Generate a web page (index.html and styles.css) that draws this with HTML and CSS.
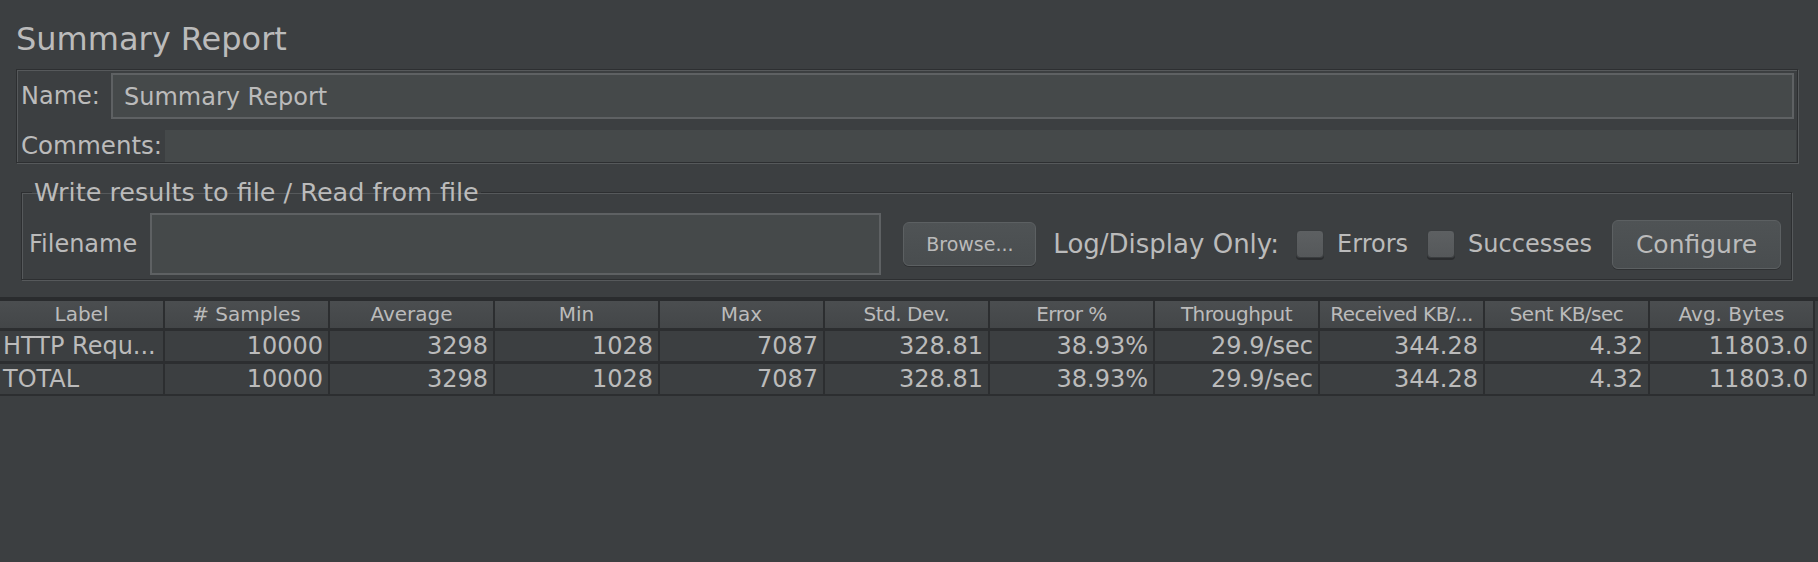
FILE: index.html
```html
<!DOCTYPE html>
<html>
<head>
<meta charset="utf-8">
<link rel="stylesheet" href="styles.css">
</head>
<body>
<div class="page">
  <h1 class="title">Summary Report</h1>
  <div class="name-panel">
    <div class="row name-row">
      <label class="lbl name-lbl">Name:</label>
      <div class="input name-input">Summary Report</div>
    </div>
    <div class="row comments-row">
      <label class="lbl">Comments:</label>
      <div class="comments-area"></div>
    </div>
  </div>
  <fieldset class="file-panel">
    <legend class="file-legend">Write results to file / Read from file</legend>
    <div class="file-row">
      <label class="lbl file-lbl">Filename</label>
      <div class="input file-input"></div>
      <button class="btn browse">Browse...</button>
      <span class="log-lbl">Log/Display Only:</span>
      <span class="check check-errors"></span>
      <span class="check-lbl">Errors</span>
      <span class="check check-succ"></span>
      <span class="check-lbl">Successes</span>
      <button class="btn configure">Configure</button>
    </div>
  </fieldset>
  <div class="results">
    <div class="grid">
      <div class="hd">Label</div>
      <div class="hd"># Samples</div>
      <div class="hd">Average</div>
      <div class="hd">Min</div>
      <div class="hd">Max</div>
      <div class="hd cond">Std. Dev.</div>
      <div class="hd cond">Error %</div>
      <div class="hd cond">Throughput</div>
      <div class="hd cond">Received KB/...</div>
      <div class="hd cond">Sent KB/sec</div>
      <div class="hd">Avg. Bytes</div>

      <div class="cell txt">HTTP Requ...</div>
      <div class="cell">10000</div>
      <div class="cell">3298</div>
      <div class="cell">1028</div>
      <div class="cell">7087</div>
      <div class="cell">328.81</div>
      <div class="cell">38.93%</div>
      <div class="cell">29.9/sec</div>
      <div class="cell">344.28</div>
      <div class="cell">4.32</div>
      <div class="cell">11803.0</div>

      <div class="cell txt">TOTAL</div>
      <div class="cell">10000</div>
      <div class="cell">3298</div>
      <div class="cell">1028</div>
      <div class="cell">7087</div>
      <div class="cell">328.81</div>
      <div class="cell">38.93%</div>
      <div class="cell">29.9/sec</div>
      <div class="cell">344.28</div>
      <div class="cell">4.32</div>
      <div class="cell">11803.0</div>
    </div>
  </div>
</div>
</body>
</html>
```
FILE: styles.css
```css
* { box-sizing: border-box; }
html, body {
  margin: 0;
  background: #3c3f41;
  height: 100%;
}
body {
  color: #bbbbbb;
  font-family: "DejaVu Sans", "Liberation Sans", sans-serif;
  font-size: 24px;
}
.title {
  margin: 0;
  padding: 19px 0 0 16px;
  height: 60px;
  font-size: 32px;
  font-weight: normal;
  line-height: 40px;
}
.name-panel {
  margin: 9px 20px 0 16px;
  border: 1px solid #2d2f31;
  box-shadow: 1px 1px 0 #56595b, inset 1px 1px 0 #56595b;
  padding: 3px 3px 0 4px;
}
.row {
  display: flex;
  align-items: center;
}
.name-row {
  height: 46px;
}
.lbl {
  font-size: 24px;
  line-height: 30px;
  white-space: nowrap;
}
.name-lbl {
  width: 90px;
  flex: none;
}
.input {
  background: #45494a;
  border: 2px solid #5e6163;
}
.name-input {
  flex: 1;
  height: 46px;
  padding-left: 11px;
  font-size: 24px;
  line-height: 44px;
}
.comments-row {
  margin-top: 11px;
  height: 32px;
}
.comments-row .lbl {
  font-size: 24.5px;
}
.comments-area {
  flex: 1;
  align-self: stretch;
  background: #45494a;
  margin-right: -2px;
  margin-left: 3px;
}
.file-panel {
  margin: 15px 26px 0 21px;
  border: 1px solid #2d2f31;
  box-shadow: 1px 1px 0 #56595b, inset 1px 1px 0 #56595b;
  padding: 7px 10px 4px 7px;
  min-width: 0;
}
.file-legend {
  font-size: 25.5px;
  line-height: 28px;
  padding: 0 2px;
  margin-left: 3px;
}
.file-row {
  display: flex;
  align-items: center;
  height: 62px;
}
.file-lbl {
  margin-right: 13px;
}
.file-input {
  flex: 1;
  height: 62px;
}
.btn {
  font-family: "DejaVu Sans", "Liberation Sans", sans-serif;
  color: #bbbbbb;
  background: linear-gradient(#4f5355, #494d4f);
  border: 1px solid #5c6062;
  border-radius: 6px;
  box-shadow: 0 1px 0 #2f3133;
  padding: 0;
  flex: none;
}
.browse {
  margin-left: 22px;
  width: 133px;
  height: 44px;
  font-size: 19px;
}
.log-lbl {
  margin-left: 17px;
  font-size: 26px;
  white-space: nowrap;
}
.check {
  flex: none;
  width: 28px;
  height: 28px;
  border-radius: 4px;
  background: linear-gradient(#5d6062, #55585a);
  border: 1px solid #3a3d3f;
  box-shadow: 0 2px 0 #2b2d2f;
  margin-right: 13px;
}
.check-errors { margin-left: 17px; }
.check-succ { margin-left: 19px; }
.check-lbl {
  font-size: 24px;
  white-space: nowrap;
}
.configure {
  margin-left: 20px;
  width: 169px;
  height: 49px;
  font-size: 25px;
}
.results {
  margin-top: 17px;
  border-top: 4px solid #2a2c2e;
}
.grid {
  width: 1815px;
  display: grid;
  grid-template-columns: repeat(11, 1fr);
  column-gap: 2px;
  row-gap: 3px;
  background: #2c2e30;
  border-right: 2px solid #2c2e30;
  padding-bottom: 2px;
}
.hd {
  height: 27px;
  line-height: 27px;
  font-size: 20px;
  text-align: center;
  background: linear-gradient(#4b4e50, #434648);
  white-space: nowrap;
  overflow: hidden;
}
.cond {
  letter-spacing: -0.5px;
}
.cell {
  height: 30px;
  line-height: 30px;
  font-size: 24px;
  text-align: right;
  padding: 0 5px 0 3px;
  background: #3c3f41;
  white-space: nowrap;
  overflow: hidden;
}
.cell.txt {
  text-align: left;
}
```
